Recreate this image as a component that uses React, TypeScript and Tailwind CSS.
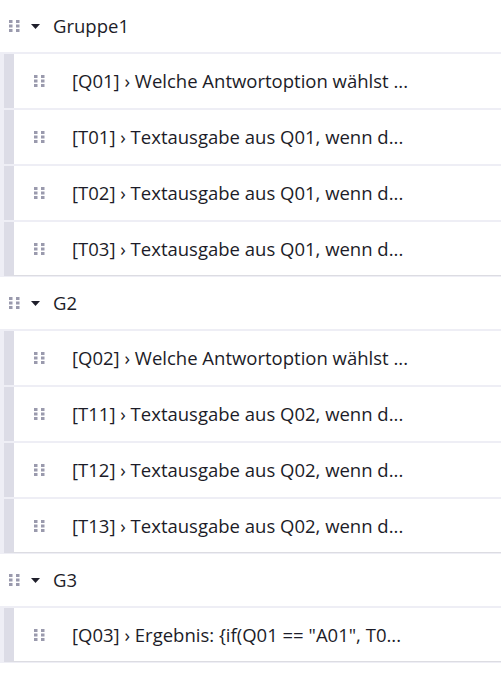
import React from "react";

type Group = { name: string; items: string[] };

const groups: Group[] = [
  {
    name: "Gruppe1",
    items: [
      "[Q01] › Welche Antwortoption wählst ...",
      "[T01] › Textausgabe aus Q01, wenn d...",
      "[T02] › Textausgabe aus Q01, wenn d...",
      "[T03] › Textausgabe aus Q01, wenn d...",
    ],
  },
  {
    name: "G2",
    items: [
      "[Q02] › Welche Antwortoption wählst ...",
      "[T11] › Textausgabe aus Q02, wenn d...",
      "[T12] › Textausgabe aus Q02, wenn d...",
      "[T13] › Textausgabe aus Q02, wenn d...",
    ],
  },
  {
    name: "G3",
    items: ['[Q03] › Ergebnis: {if(Q01 == "A01", T0...'],
  },
];

function Handle() {
  return (
    <svg width="11" height="12" viewBox="0 0 11 12" className="shrink-0">
      {[0, 4.5, 9].map((y) =>
        [0, 7].map((x) => (
          <rect key={`${x}-${y}`} x={x} y={y} width="3.5" height="3" fill="#9a9aad" />
        ))
      )}
    </svg>
  );
}

function Caret() {
  return (
    <svg width="9" height="5" viewBox="0 0 9 5" className="shrink-0">
      <path d="M0 0 L9 0 L4.5 5 Z" fill="#1f1f2b" />
    </svg>
  );
}

export default function App() {
  return (
    <div
      className="w-[501px] bg-white text-[18.5px] text-[#1c1c28]"
      style={{ fontFamily: '"Open Sans", "Noto Sans", sans-serif' }}
    >
      {groups.map((g) => (
        <div key={g.name}>
          <div className="flex h-[52px] items-center pl-[9px]">
            <Handle />
            <div className="ml-[11px]">
              <Caret />
            </div>
            <span className="ml-[13px]">{g.name}</span>
          </div>
          <div className="flex flex-col gap-[2px] bg-[#eeeef5] pt-[2px] pl-[4px]">
            {g.items.map((t, i) => (
              <div
                key={t}
                className={`flex h-[54px] items-center border-l-[10px] border-[#dcdce6] bg-white pl-[20px] ${
                  i === g.items.length - 1 ? "border-b border-b-[#dcdce2]" : ""
                }`}
              >
                <Handle />
                <span className="ml-[27px] whitespace-nowrap">{t}</span>
              </div>
            ))}
          </div>
          <div className="h-[1px] bg-[#eeeef5]" />
        </div>
      ))}
    </div>
  );
}
